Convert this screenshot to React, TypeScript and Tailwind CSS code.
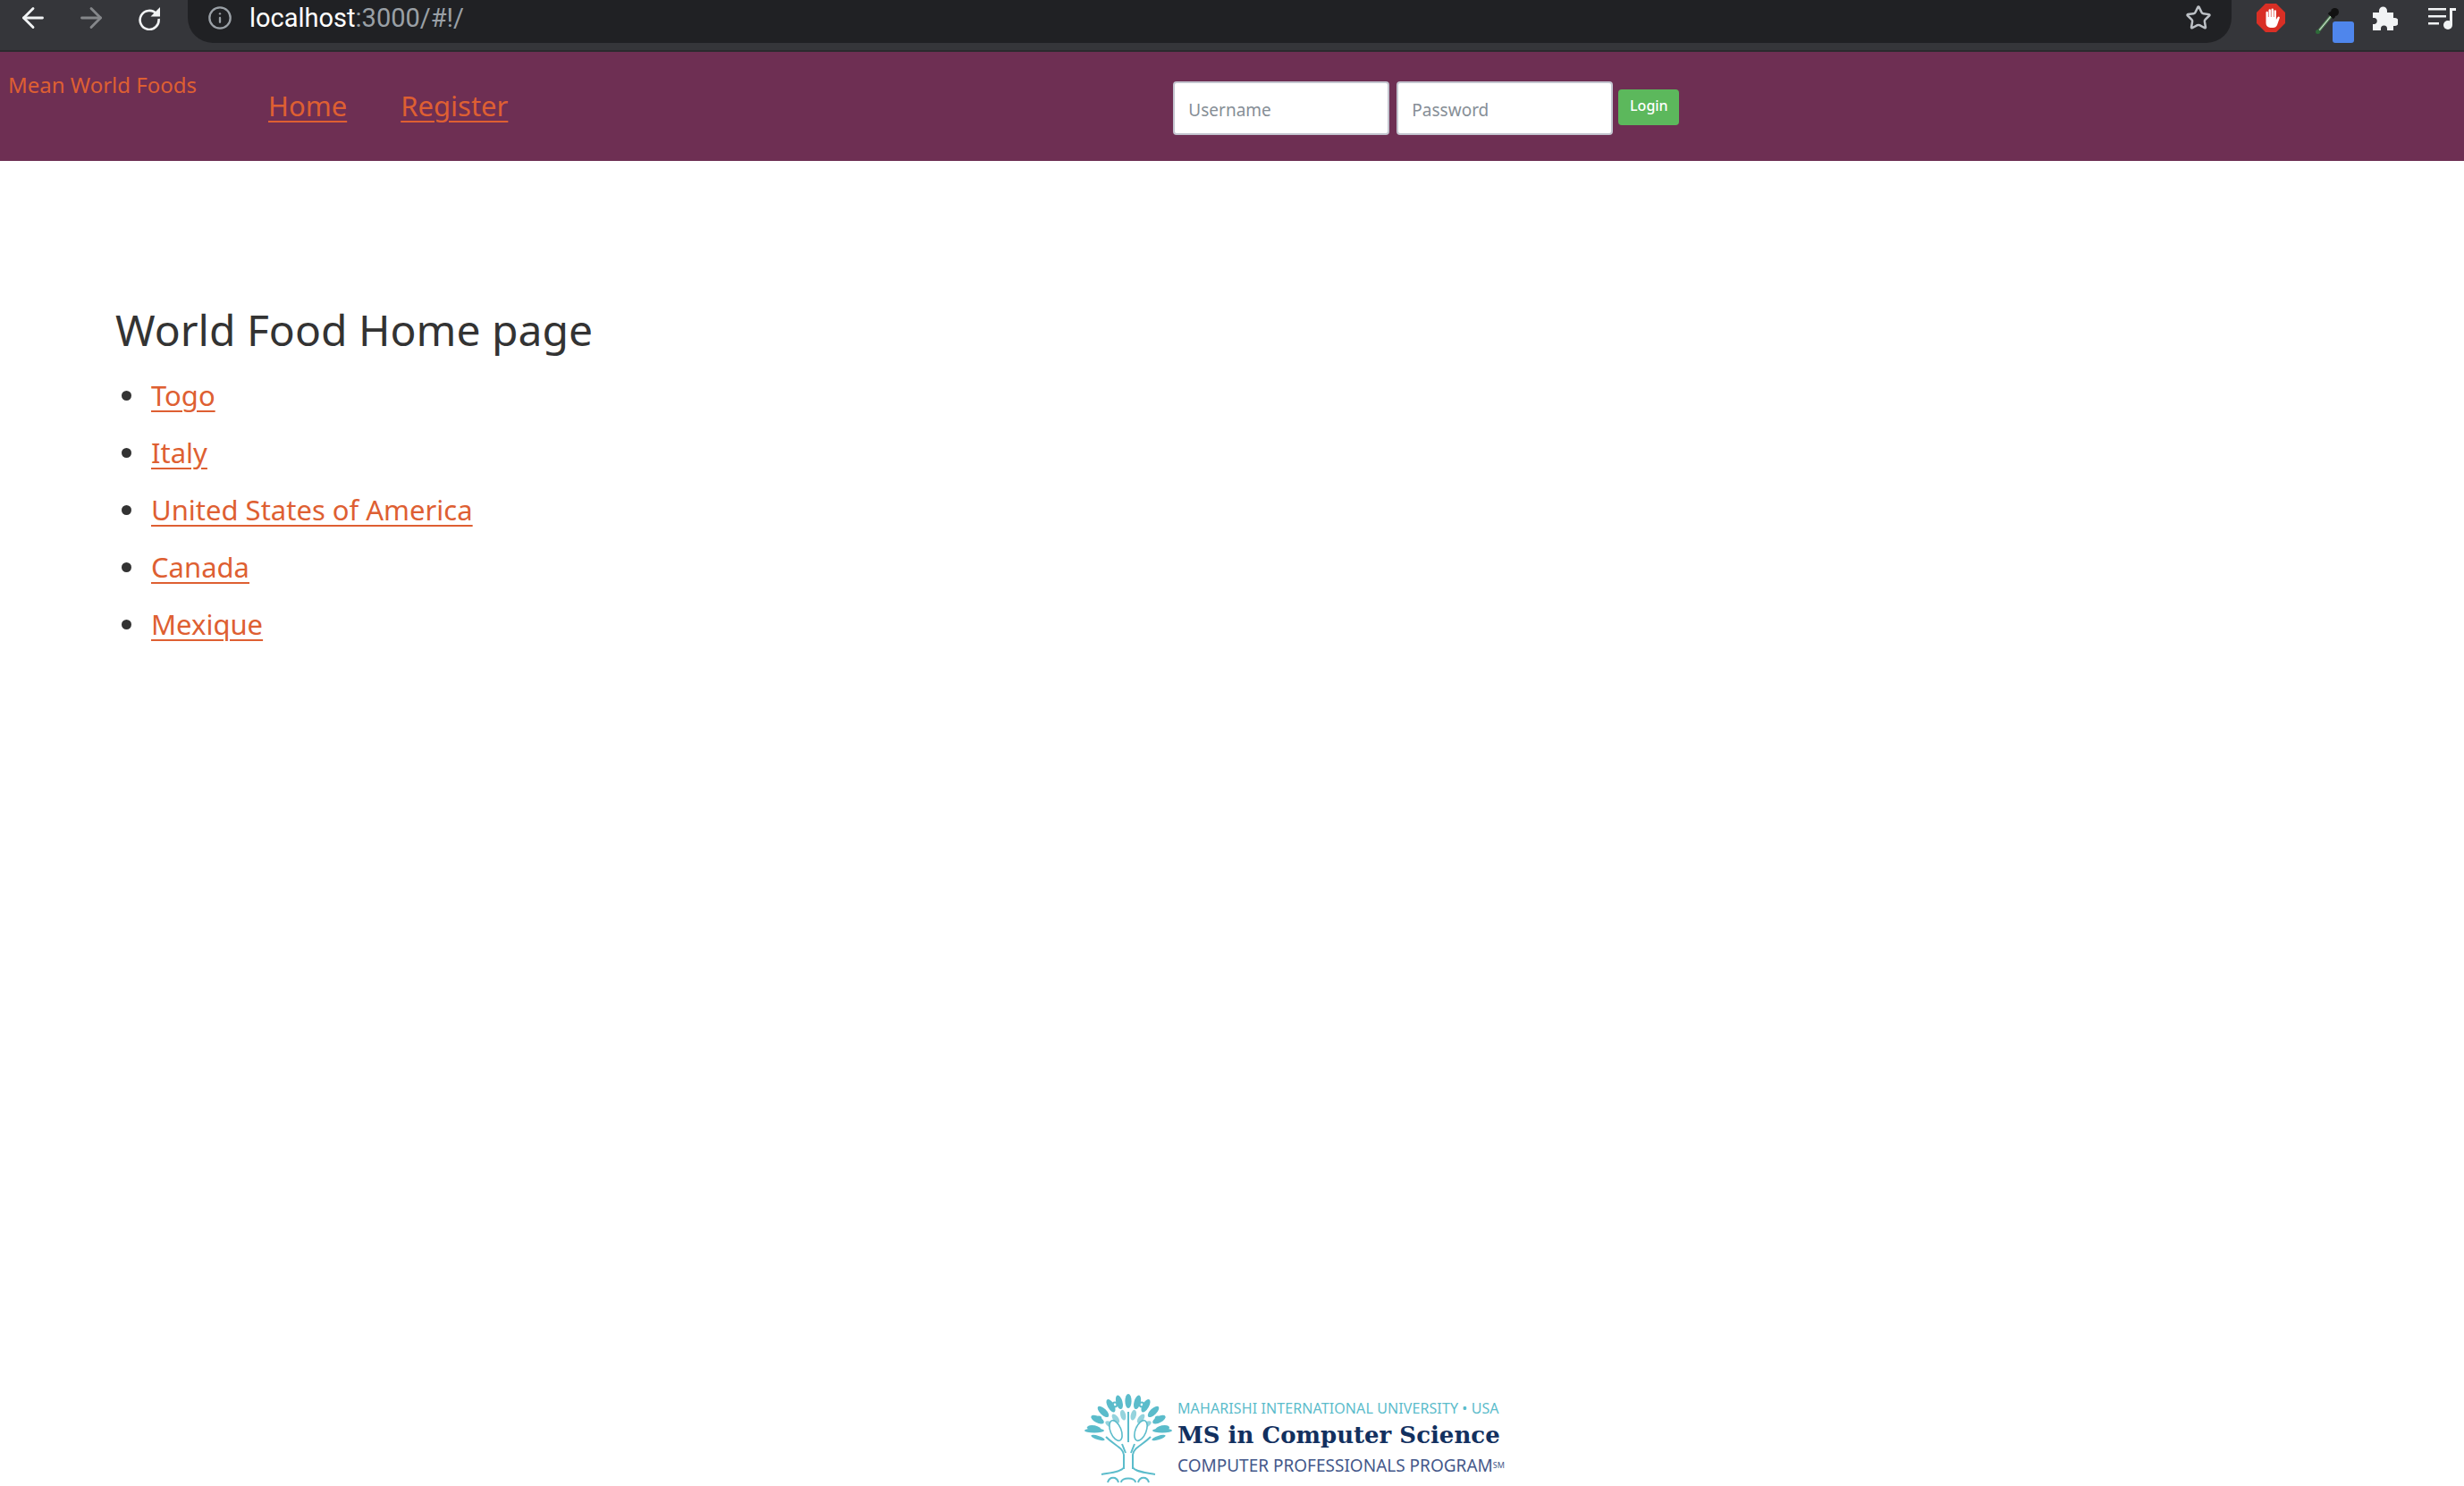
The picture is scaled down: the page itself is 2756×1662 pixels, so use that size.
import { ArrowLeft, ArrowRight, Info, Star } from "lucide-react";

const countries = ["Togo", "Italy", "United States of America", "Canada", "Mexique"];

function Reload() {
    return (
        <svg width="28" height="28" viewBox="0 0 28 28" fill="none" className="shrink-0">
            <path d="M22 9.5A10.5 10.5 0 1 0 24.5 15" stroke="#f1f3f4" strokeWidth="2.6" />
            <path d="M26 2v10.5H15.5z" fill="#f1f3f4" />
        </svg>
    );
}

function StopHand() {
    return (
        <svg width="32" height="32" viewBox="0 0 32 32">
            <path d="M10 0h12l10 10v12L22 32H10L0 22V10z" fill="#d92f25" />
            <path
                d="M10.5 19V10a1.2 1.2 0 0 1 2.4 0v5h.6V7.5a1.2 1.2 0 0 1 2.4 0V15h.6V6.8a1.2 1.2 0 0 1 2.4 0V15h.6V8.5a1.2 1.2 0 0 1 2.4 0V18l1.8-3a1.2 1.2 0 0 1 2 1.3L23 24a5 5 0 0 1-4.5 3h-3a5 5 0 0 1-5-5z"
                fill="#fff"
            />
        </svg>
    );
}

function Eyedropper() {
    return (
        <div className="relative w-[40px] h-[48px]">
            <svg width="30" height="36" viewBox="0 0 30 36" className="ml-[-4px]">
                <path d="M6 30 20 13" stroke="#5a8f5e" strokeWidth="3" />
                <path d="M6 30 20 13" stroke="#e8e8e8" strokeWidth="1" />
                <circle cx="4.5" cy="31.5" r="2.5" fill="#2f6b3a" />
                <path d="M17 10l6 6" stroke="#111" strokeWidth="3.5" />
                <circle cx="23.5" cy="9.5" r="4.5" fill="#111" />
            </svg>
            <div className="absolute left-[17px] top-[20px] w-[24px] h-[24px] rounded-[3px] bg-[#4f86ec]" />
        </div>
    );
}

function PuzzleIcon() {
    return (
        <svg width="30" height="30" viewBox="0 0 30 30">
            <path
                d="M2 9h7V7a4.5 4.5 0 0 1 9 0v2h7v6h1.5a4.5 4.5 0 0 1 0 9H25v5h-7v-2a3.5 3.5 0 0 0-7 0v2H2v-7h2a3.6 3.6 0 0 0 0-7H2z"
                fill="#f1f3f4"
            />
        </svg>
    );
}

function MediaIcon() {
    return (
        <svg width="32" height="28" viewBox="0 0 32 28">
            <path d="M0 3h20v2.5H0zM0 11h20v2.5H0zM0 19h12v2.5H0z" fill="#f1f3f4" />
            <path d="M24 3h7v3h-4v16h-3z" fill="#f1f3f4" />
            <circle cx="22" cy="22" r="5" fill="#f1f3f4" />
        </svg>
    );
}

function Tree() {
    const outer = [-78, -62, -46, -30, -15, 0, 15, 30, 46, 62, 78];
    const inner = [-58, -36, -14, 14, 36, 58];
    return (
        <svg width="98" height="100" viewBox="0 0 98 100" className="shrink-0">
            <g fill="#5bbccb">
                {outer.map((a) => (
                    <ellipse key={a} cx="49" cy="8" rx="3.6" ry="8" transform={`rotate(${a} 49 47)`} />
                ))}
                {inner.map((a) => (
                    <ellipse key={a} cx="49" cy="23" rx="3" ry="6" transform={`rotate(${a} 49 47)`} opacity="0.65" />
                ))}
                <ellipse cx="11" cy="41" rx="11" ry="2.6" />
                <ellipse cx="87" cy="41" rx="11" ry="2.6" />
                <ellipse cx="15" cy="49" rx="8" ry="2.2" transform="rotate(18 15 49)" />
                <ellipse cx="83" cy="49" rx="8" ry="2.2" transform="rotate(-18 83 49)" />
            </g>
            <g fill="#ffffff" stroke="#5bbccb" strokeWidth="1.6">
                <ellipse cx="35" cy="41" rx="6" ry="12" transform="rotate(-22 35 41)" />
                <ellipse cx="63" cy="41" rx="6" ry="12" transform="rotate(22 63 41)" />
            </g>
            <g stroke="#5bbccb" fill="none" strokeWidth="2">
                <path d="M44 84V68C43 60 34 58 24 48M54 84V68C55 60 64 58 74 48" />
                <path d="M49 54V20M46 66 42 56M52 66 56 56" />
                <path d="M19 90C30 88 42 87 44 82M79 90C68 88 56 87 54 82" />
                <path d="M26 99c2-7 10-7 12 0M41 99c0-6 16-6 16 0M60 99c2-7 10-7 12 0" />
                <circle cx="34" cy="12" r="2.4" />
                <circle cx="64" cy="12" r="2.4" />
                <circle cx="16" cy="28" r="2.4" />
                <circle cx="82" cy="28" r="2.4" />
            </g>
        </svg>
    );
}

export default function App() {
    return (
        <div className="h-[1662px] flex flex-col bg-white font-['Noto_Sans',sans-serif] overflow-hidden">
            {/* browser toolbar */}
            <div className="h-[58px] shrink-0 bg-[#35363a] border-b-2 border-[#2a2a2e] flex items-start">
                <div className="w-[210px] h-[40px] flex items-center pl-[19px] gap-[29px] shrink-0">
                    <ArrowLeft size={36} color="#f1f3f4" strokeWidth={1.9} className="shrink-0" />
                    <ArrowRight size={36} color="#85878a" strokeWidth={1.9} className="shrink-0" />
                    <div className="w-[36px] flex justify-center shrink-0">
                        <Reload />
                    </div>
                </div>
                <div className="w-[2286px] shrink-0 h-[48px] bg-[#202124] rounded-b-[28px] flex items-start pl-[69px] pr-[22px] relative">
                    <Info size={28} color="#9aa0a6" strokeWidth={2} className="absolute left-[22px] top-[6px]" />
                    <div className="font-['Roboto',sans-serif] text-[29px] leading-[40px] text-white">
                        localhost<span className="text-[#9aa0a6]">:3000/#!/</span>
                    </div>
                    <Star size={30} color="#bdc1c6" strokeWidth={2} className="ml-auto mt-[5px]" />
                </div>
                <div className="flex-1 h-[48px] flex items-start pt-[4px]">
                    <div className="ml-[28px]">
                        <StopHand />
                    </div>
                    <div className="ml-[36px]">
                        <Eyedropper />
                    </div>
                    <div className="ml-[20px] mt-[1px]">
                        <PuzzleIcon />
                    </div>
                    <div className="ml-[34px] mt-[2px]">
                        <MediaIcon />
                    </div>
                </div>
            </div>

            {/* app nav */}
            <nav className="h-[122px] shrink-0 bg-[#6e2f53] flex items-start text-[#de5f32]">
                <a className="ml-[9px] mt-[20px] text-[24px] leading-[34px] w-[291px] shrink-0">Mean World Foods</a>
                <a className="mt-[39px] text-[31px] leading-[42px] underline underline-offset-[5px] decoration-2">Home</a>
                <a className="ml-[60px] mt-[39px] text-[31px] leading-[42px] underline underline-offset-[5px] decoration-2">Register</a>
                <form className="ml-[744px] mt-[33px] flex items-start gap-[8px]">
                    <input
                        placeholder="Username"
                        className="w-[242px] h-[60px] rounded-[4px] bg-white border-2 border-[#c3c5cf] px-[15px] pt-[4px] text-[19px] placeholder:text-[#868e96] outline-none"
                    />
                    <input
                        placeholder="Password"
                        className="w-[242px] h-[60px] rounded-[4px] bg-white border-2 border-[#c3c5cf] px-[15px] pt-[4px] text-[19px] placeholder:text-[#868e96] outline-none"
                    />
                    <button
                        type="button"
                        className="mt-[9px] ml-[-2px] w-[68px] h-[40px] rounded-[4px] bg-[#5cb85c] text-white text-[16px] font-medium pb-[5px]"
                    >
                        Login
                    </button>
                </form>
            </nav>

            {/* content */}
            <main className="pl-[129px] pt-[162px] text-[#333333]">
                <h1 className="text-[48px] leading-[54px]">World Food Home page</h1>
                <ul className="pl-[7px] mt-[14px]">
                    {countries.map((c) => (
                        <li key={c} className="h-[64px] flex items-center text-[31px]">
                            <span className="w-[11px] h-[11px] rounded-full bg-[#333333] mr-[22px]" />
                            <a className="text-[#de5f32] underline underline-offset-[5px] decoration-2">{c}</a>
                        </li>
                    ))}
                </ul>
            </main>

            {/* footer logo */}
            <footer className="mt-auto pb-[3px] pl-[1213px] flex items-center gap-[6px]">
                <Tree />
                <div className="flex flex-col">
                    <span className="text-[16px] leading-[22px] tracking-[0.1px] text-[#5bbccb] whitespace-nowrap">
                        MAHARISHI INTERNATIONAL UNIVERSITY • USA
                    </span>
                    <span className="font-['DejaVu_Serif',serif] font-bold text-[26px] leading-[38px] text-[#12305f] whitespace-nowrap">
                        MS in Computer Science
                    </span>
                    <span className="text-[19px] leading-[30px] text-[#44588a] whitespace-nowrap">
                        COMPUTER PROFESSIONALS PROGRAM<sup className="text-[9px]">SM</sup>
                    </span>
                </div>
            </footer>
        </div>
    );
}
